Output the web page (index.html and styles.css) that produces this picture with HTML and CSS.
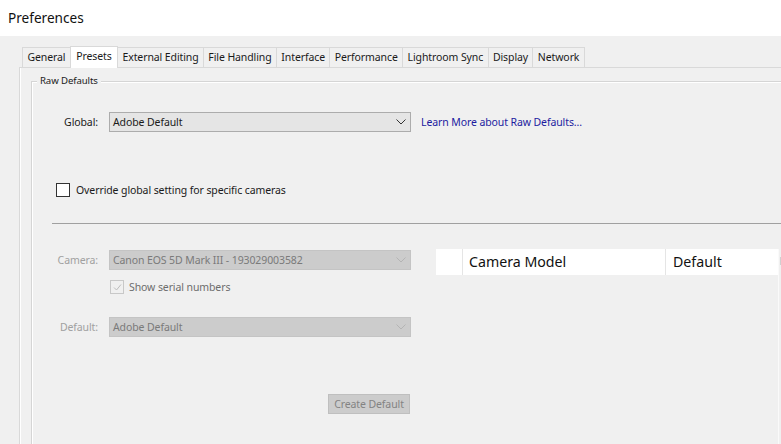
FILE: index.html
```html
<!DOCTYPE html>
<html>
<head>
<meta charset="utf-8">
<link rel="stylesheet" href="styles.css">
</head>
<body>
<div class="titlebar">Preferences</div>
<div class="dialog">
  <div class="tabs">
    <div class="tab">General</div>
    <div class="tab active">Presets</div>
    <div class="tab">External Editing</div>
    <div class="tab">File Handling</div>
    <div class="tab">Interface</div>
    <div class="tab">Performance</div>
    <div class="tab">Lightroom Sync</div>
    <div class="tab">Display</div>
    <div class="tab">Network</div>
  </div>
  <div class="panel">
    <div class="group">
      <div class="legend">Raw Defaults</div>
      <div class="row global-row">
        <span class="label">Global:</span>
        <div class="select">
          <span>Adobe Default</span>
          <svg class="chev" width="10" height="6" viewBox="0 0 10 6"><path d="M0.5 0.5 L5 5 L9.5 0.5" fill="none" stroke="#333" stroke-width="1"/></svg>
        </div>
        <span class="link">Learn More about Raw Defaults...</span>
      </div>
      <div class="override">
        <span class="cb"></span>
        <span>Override global setting for specific cameras</span>
      </div>
      <div class="sep"></div>
      <div class="lower">
        <div class="form">
          <div class="row">
            <span class="label dis">Camera:</span>
            <div class="select disabled">
              <span>Canon EOS 5D Mark III - 193029003582</span>
              <svg class="chev" width="10" height="6" viewBox="0 0 10 6"><path d="M0.5 0.5 L5 5 L9.5 0.5" fill="none" stroke="#b4b4b4" stroke-width="1"/></svg>
            </div>
          </div>
          <div class="serial">
            <span class="cb dis-cb"><svg width="11" height="11" viewBox="0 0 11 11"><path d="M2 5.5 L4.5 8 L9 2.5" fill="none" stroke="#bdbdbd" stroke-width="1"/></svg></span>
            <span class="dis-text">Show serial numbers</span>
          </div>
          <div class="row default-row">
            <span class="label dis">Default:</span>
            <div class="select disabled">
              <span>Adobe Default</span>
              <svg class="chev" width="10" height="6" viewBox="0 0 10 6"><path d="M0.5 0.5 L5 5 L9.5 0.5" fill="none" stroke="#b4b4b4" stroke-width="1"/></svg>
            </div>
          </div>
          <div class="btn-row">
            <div class="btn">Create Default</div>
          </div>
        </div>
        <div class="table">
          <div class="thead">
            <div class="th th-first"></div>
            <div class="th th-model">Camera Model</div>
            <div class="th th-default">Default</div>
          </div>
          <div class="scroll-thumb"></div>
        </div>
      </div>
    </div>
  </div>
</div>
</body>
</html>
```
FILE: styles.css
```css
html, body {
  margin: 0;
  padding: 0;
}
body {
  width: 781px;
  height: 444px;
  overflow: hidden;
  background: #f0f0f0;
  font-family: "Noto Sans", "Open Sans", sans-serif;
  font-size: 10.5px;
  letter-spacing: -0.1px;
  color: #1a1a1a;
}
.titlebar {
  height: 36px;
  background: #fff;
  padding-left: 8px;
  font-size: 13.6px;
  letter-spacing: 0;
  line-height: 36px;
  color: #111;
}
.dialog {
  padding-left: 19px;
  padding-top: 10px;
}
.tabs {
  display: flex;
  height: 21px;
  padding-left: 3px;
  align-items: flex-end;
}
.tab {
  height: 20px;
  line-height: 19px;
  padding: 0 4.4px;
  border: 1px solid #d9d9d9;
  border-bottom: none;
  border-right: none;
  background: #f0f0f0;
  box-sizing: border-box;
  white-space: nowrap;
}
.tab:last-child {
  border-right: 1px solid #d9d9d9;
}
.tab.active {
  height: 22px;
  background: #fff;
  margin-bottom: -1px;
  position: relative;
  z-index: 1;
  padding: 0 5.4px;
  line-height: 19px;
  border-right: 1px solid #d9d9d9;
  margin-right: -1px;
}
.panel {
  border-top: 1px solid #d9d9d9;
  border-left: 1px solid #d9d9d9;
  box-shadow: inset 1px 0 #fff;
  height: 400px;
  padding-left: 11px;
  padding-top: 13px;
}
.group {
  border-top: 1px solid #d5d5d5;
  border-left: 1px solid #d5d5d5;
  box-shadow: inset 1px 0 #fff, inset 0 1px #fff;
  height: 380px;
  position: relative;
}
.legend {
  position: absolute;
  top: -8px;
  left: 5px;
  padding: 0 3px;
  background: #f0f0f0;
  font-size: 9.6px;
  line-height: 14px;
}
.row {
  display: flex;
  align-items: center;
  height: 20px;
}
.label {
  width: 66px;
  text-align: right;
  margin-right: 11px;
}
.global-row {
  margin-top: 30px;
}
.select {
  width: 302px;
  height: 20px;
  box-sizing: border-box;
  border: 1px solid #acacac;
  background: #e5e5e5;
  display: flex;
  align-items: center;
  justify-content: space-between;
  padding: 0 4px 0 3px;
}
.select.disabled {
  background: #cccccc;
  border-color: #c4c4c4;
  color: #7a7a7a;
}
.chev {
  display: block;
}
.link {
  margin-left: 10px;
  color: #1c1ca0;
}
.override {
  display: flex;
  align-items: center;
  height: 14px;
  margin-top: 51px;
  margin-left: 24px;
}
.cb {
  width: 14px;
  height: 14px;
  box-sizing: border-box;
  border: 1px solid #333;
  background: #fff;
  margin-right: 6px;
  display: flex;
  align-items: center;
  justify-content: center;
}
.sep {
  margin-top: 26px;
  margin-left: 20px;
  height: 1px;
  background: #a0a0a0;
}
.lower {
  display: flex;
  margin-top: 26px;
}
.form {
  width: 404px;
}
.dis {
  color: #a0a0a0;
}
.serial {
  display: flex;
  align-items: center;
  height: 14px;
  margin-top: 10px;
  margin-left: 78px;
}
.dis-cb {
  border-color: #c8c8c8;
  background: #f0f0f0;
  margin-right: 5px;
}
.dis-text {
  color: #6d6d6d;
}
.default-row {
  margin-top: 23px;
}
.btn-row {
  display: flex;
  justify-content: flex-end;
  margin-top: 57px;
  width: 378px;
}
.btn {
  width: 82px;
  height: 20px;
  box-sizing: border-box;
  background: #cccccc;
  border: 1px solid #bfbfbf;
  color: #838383;
  text-align: center;
  line-height: 18px;
}
.table {
  margin-top: -1px;
  width: 342px;
  height: 200px;
  border-right: 1px solid #fafafa;
  position: relative;
}
.thead {
  display: flex;
  height: 26px;
  background: #fff;
  font-size: 14.2px;
  letter-spacing: 0;
  color: #111;
}
.th {
  line-height: 26px;
  box-sizing: border-box;
}
.th-first {
  width: 27px;
  border-right: 1px solid #e5e5e5;
}
.th-model {
  width: 203px;
  padding-left: 6px;
  border-right: 1px solid #e5e5e5;
}
.th-default {
  flex: 1;
  padding-left: 7px;
}
.scroll-thumb {
  position: absolute;
  right: -4px;
  top: 8px;
  width: 2px;
  height: 8px;
  background: #d0d0d0;
}
```
